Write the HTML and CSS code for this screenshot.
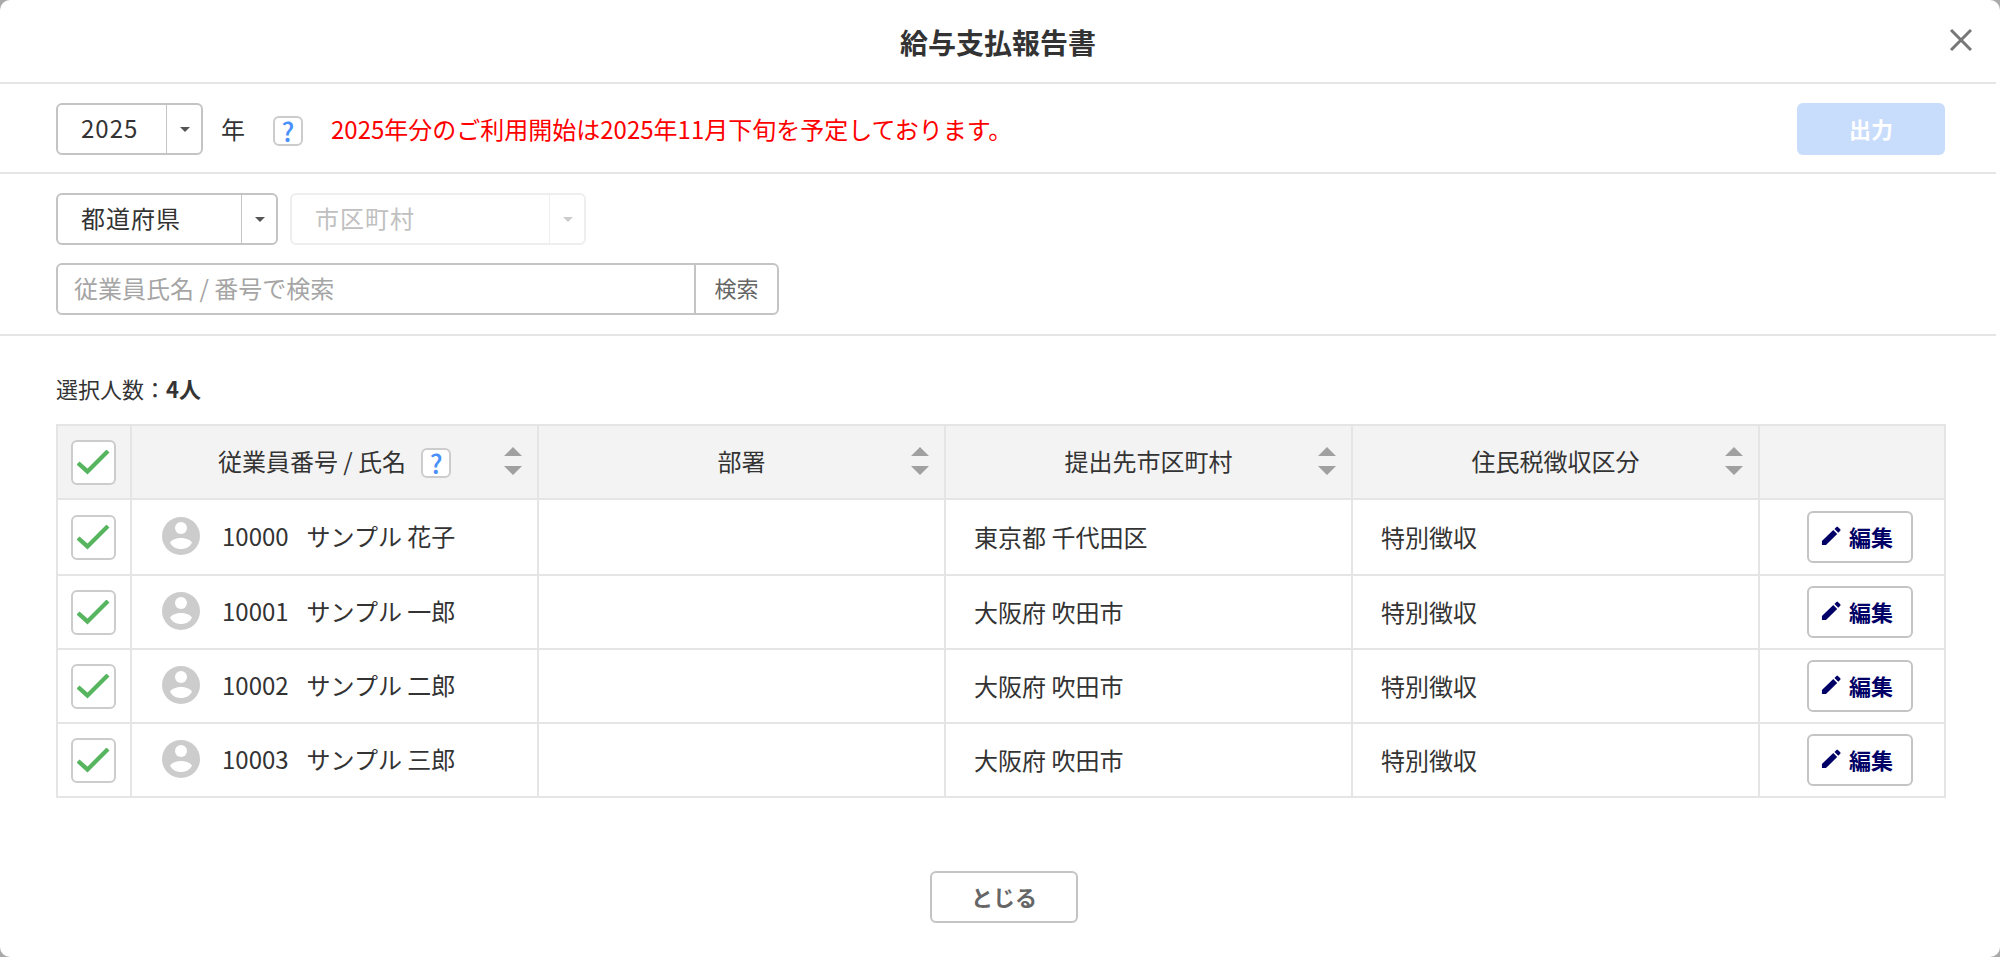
FILE: index.html
```html
<!DOCTYPE html>
<html lang="ja">
<head>
    <meta charset="UTF-8">
    <meta name="viewport" content="width=device-width, initial-scale=1.0">
    <title>給与支払報告書</title>
    <link rel="stylesheet" href="styles.css">
</head>
<body>
    <svg class="icon-defs" aria-hidden="true">
        <symbol id="icon-user" viewBox="0 0 38 38">
            <circle cx="19" cy="19" r="19" fill="#ccc"/>
            <circle cx="19" cy="11" r="6" fill="#fff"/>
            <path d="M8 25.500C10 22.500 14.500 21 19 21s9 1.500 11 4.500C28 30 23.500 32 19 32S10 30 8 25.500z" fill="#fff"/>
        </symbol>
        <symbol id="icon-pencil" viewBox="0 0 22 22">
            <path d="M1 21v-4.500L13.500 4.500l4.300 4.300L5.500 21z" fill="currentColor"/>
            <path d="M14.800 3.200L17 1q.8-.7 1.600 0l2.600 2.600q.7.800 0 1.600L19 7.500z" fill="currentColor"/>
        </symbol>
        <symbol id="icon-sort" viewBox="0 0 18 28">
            <path d="M0 9L9 0l9 9zM0 19h18l-9 9z" fill="#a0a0a0"/>
        </symbol>
    </svg>

    <div class="modal">
        <div class="modal-header">
            <h1>給与支払報告書</h1>
            <button class="close" aria-label="閉じる">
                <svg width="22" height="22" viewBox="0 0 22 22"><path d="M1 1l20 20M21 1L1 21" stroke="#777" stroke-width="3"/></svg>
            </button>
        </div>

        <div class="year-bar">
            <div class="select-box year">
                <select id="year"><option>2025</option></select>
            </div>
            <label class="year-label" for="year">年</label>
            <button class="help" aria-label="ヘルプ">?</button>
            <p class="notice">2025年分のご利用開始は2025年11月下旬を予定しております。</p>
            <button class="btn primary" disabled>出力</button>
        </div>

        <div class="filters">
            <div class="filter-row">
                <div class="select-box prefecture">
                    <select aria-label="都道府県"><option>都道府県</option></select>
                </div>
                <div class="select-box city disabled">
                    <select aria-label="市区町村" disabled><option>市区町村</option></select>
                </div>
            </div>
            <div class="search">
                <input type="text" placeholder="従業員氏名 / 番号で検索" aria-label="従業員氏名 / 番号で検索">
                <button>検索</button>
            </div>
        </div>

        <div class="content">
            <p class="count">選択人数：<b>4人</b></p>
            <table>
                <colgroup>
                    <col class="col-check">
                    <col>
                    <col>
                    <col>
                    <col>
                    <col class="col-edit">
                </colgroup>
                <thead>
                    <tr>
                        <th><input type="checkbox" aria-label="すべて選択" checked></th>
                        <th>
                            <div class="head-cell">
                                <span>従業員番号 / 氏名</span>
                                <button class="help" aria-label="ヘルプ">?</button>
                                <svg class="sort"><use href="#icon-sort"/></svg>
                            </div>
                        </th>
                        <th><div class="head-cell"><span>部署</span><svg class="sort"><use href="#icon-sort"/></svg></div></th>
                        <th><div class="head-cell"><span>提出先市区町村</span><svg class="sort"><use href="#icon-sort"/></svg></div></th>
                        <th><div class="head-cell"><span>住民税徴収区分</span><svg class="sort"><use href="#icon-sort"/></svg></div></th>
                        <th></th>
                    </tr>
                </thead>
                <tbody>
                    <tr>
                        <td><input type="checkbox" aria-label="10000" checked></td>
                        <td><div class="employee"><svg class="avatar"><use href="#icon-user"/></svg><span>10000</span><span>サンプル 花子</span></div></td>
                        <td></td>
                        <td>東京都 千代田区</td>
                        <td>特別徴収</td>
                        <td><button class="btn edit"><svg class="pencil"><use href="#icon-pencil"/></svg>編集</button></td>
                    </tr>
                    <tr>
                        <td><input type="checkbox" aria-label="10001" checked></td>
                        <td><div class="employee"><svg class="avatar"><use href="#icon-user"/></svg><span>10001</span><span>サンプル 一郎</span></div></td>
                        <td></td>
                        <td>大阪府 吹田市</td>
                        <td>特別徴収</td>
                        <td><button class="btn edit"><svg class="pencil"><use href="#icon-pencil"/></svg>編集</button></td>
                    </tr>
                    <tr>
                        <td><input type="checkbox" aria-label="10002" checked></td>
                        <td><div class="employee"><svg class="avatar"><use href="#icon-user"/></svg><span>10002</span><span>サンプル 二郎</span></div></td>
                        <td></td>
                        <td>大阪府 吹田市</td>
                        <td>特別徴収</td>
                        <td><button class="btn edit"><svg class="pencil"><use href="#icon-pencil"/></svg>編集</button></td>
                    </tr>
                    <tr>
                        <td><input type="checkbox" aria-label="10003" checked></td>
                        <td><div class="employee"><svg class="avatar"><use href="#icon-user"/></svg><span>10003</span><span>サンプル 三郎</span></div></td>
                        <td></td>
                        <td>大阪府 吹田市</td>
                        <td>特別徴収</td>
                        <td><button class="btn edit"><svg class="pencil"><use href="#icon-pencil"/></svg>編集</button></td>
                    </tr>
                </tbody>
            </table>
        </div>

        <div class="modal-footer">
            <button class="btn">とじる</button>
        </div>
    </div>
</body>
</html>
```

FILE: styles.css
```css
* {
    box-sizing: border-box;
}
body {
    margin: 0;
    background: #aaa;
    color: #333;
    font-family: "Noto Sans CJK JP", sans-serif;
    font-size: 24px;
    line-height: 36px;
}
button, input, select {
    font: inherit;
    color: inherit;
}
h1, p {
    margin: 0;
}
.icon-defs {
    display: none;
}
.modal {
    min-height: 100vh;
    padding-right: 4px;
    background: #fff;
    border-radius: 10px;
}
.modal-header {
    position: relative;
    padding: 24px 0 22px;
    border-bottom: 2px solid #e5e5e5;
}
.modal-header h1 {
    font-size: 28px;
    line-height: 36px;
    text-align: center;
}
.close {
    position: absolute;
    top: 29px;
    right: 24px;
    padding: 0;
    border: none;
    background: none;
    line-height: 0;
    cursor: pointer;
}
.year-bar {
    display: flex;
    align-items: center;
    padding: 19px 51px 17px 56px;
    border-bottom: 2px solid #e5e5e5;
}
.year-label {
    margin: 0 28px 0 18px;
}
.notice {
    flex-grow: 1;
    margin-left: 28px;
    color: #f00;
}

/* drop-downs */
.select-box {
    position: relative;
    height: 52px;
    border: 2px solid #c4c4c4;
    border-radius: 6px;
}
.select-box select {
    display: block;
    width: 100%;
    height: 100%;
    padding: 0 60px 2px 23px;
    border: none;
    background: none;
    appearance: none;
    letter-spacing: 1px;
    opacity: 1;
}
.select-box::before {
    content: "";
    position: absolute;
    top: 0;
    bottom: 0;
    right: 34px;
    border-left: 1px solid #c4c4c4;
}
.select-box::after {
    content: "";
    position: absolute;
    top: 22px;
    right: 11px;
    border: 5px solid transparent;
    border-top-color: #555;
    border-bottom: none;
}
.select-box.year {
    width: 147px;
}
.select-box.prefecture {
    width: 222px;
}
.select-box.city {
    width: 296px;
}
.select-box.disabled {
    border-color: #eee;
    color: #c0c0c0;
}
.select-box.disabled::before {
    border-color: #eee;
}
.select-box.disabled::after {
    border-top-color: #ccc;
}

.help {
    width: 30px;
    height: 30px;
    margin-top: 4px;
    padding: 0;
    border: 2px solid #ccc;
    border-radius: 6px;
    background: #fff;
    color: #4a90fa;
    font-size: 26px;
    font-weight: 500;
    line-height: 26px;
}
.btn {
    width: 148px;
    height: 52px;
    padding: 0 0 2px;
    border: 2px solid #c4c4c4;
    border-radius: 6px;
    background: #fff;
    color: #666;
    font-size: 22px;
    font-weight: bold;
    cursor: pointer;
}
.btn.primary {
    border: none;
    background: #c8dcfb;
    color: #fff;
}

.filters {
    padding: 19px 56px;
    border-bottom: 2px solid #e5e5e5;
}
.filter-row {
    display: flex;
    gap: 12px;
    margin-bottom: 18px;
}
.search {
    display: flex;
    width: 723px;
    height: 52px;
    border: 2px solid #c4c4c4;
    border-radius: 6px;
}
.search input {
    flex-grow: 1;
    padding: 0 16px 2px;
    border: none;
    background: none;
}
.search input::placeholder {
    color: #a5a5a5;
}
.search button {
    width: 83px;
    padding: 0 0 4px;
    border: none;
    border-left: 2px solid #c4c4c4;
    background: none;
    color: #666;
    font-size: 22px;
}

.content {
    padding: 34px 50px 0 56px;
}
.count {
    margin-bottom: 18px;
    font-size: 22px;
}
table {
    width: 100%;
    table-layout: fixed;
    border-collapse: collapse;
}
.col-check {
    width: 74px;
}
.col-edit {
    width: 186px;
}
th, td {
    height: 74px;
    padding: 0 28px;
    border: 2px solid #e5e5e5;
    font-weight: normal;
    text-align: left;
}
th {
    padding-bottom: 2px;
    background: #f3f3f3;
}
tbody tr:first-child td {
    height: 76px;
}
th:first-child, td:first-child {
    padding: 0 2px 0 0;
    text-align: center;
}
td:last-child {
    padding: 0 0 0 16px;
    text-align: center;
}
.head-cell {
    position: relative;
    display: flex;
    align-items: center;
    justify-content: center;
    gap: 15px;
}
.sort {
    position: absolute;
    right: -13px;
    width: 18px;
    height: 28px;
}
.employee {
    display: flex;
    align-items: center;
    gap: 18px;
    padding: 0 0 2px 2px;
}
.avatar {
    width: 38px;
    height: 38px;
    margin-right: 4px;
}
input[type="checkbox"] {
    appearance: none;
    display: inline-grid;
    place-items: center;
    width: 45px;
    height: 45px;
    margin: 0;
    border: 2px solid #ccc;
    border-radius: 6px;
    background: #fff;
    vertical-align: middle;
}
input[type="checkbox"]:checked::before {
    content: "";
    width: 33px;
    height: 25px;
    background: #57b560;
    clip-path: polygon(0 15px, 3px 12px, 11px 19px, 30px 0, 33px 3px, 11px 25px);
}
.btn.edit {
    display: inline-flex;
    align-items: center;
    justify-content: center;
    gap: 8px;
    width: 106px;
    padding: 0 6px 2px 0;
    color: #000066;
    vertical-align: middle;
}
.pencil {
    width: 20px;
    height: 20px;
}

.modal-footer {
    display: flex;
    justify-content: center;
    padding: 73px 0 32px 12px;
}
```
